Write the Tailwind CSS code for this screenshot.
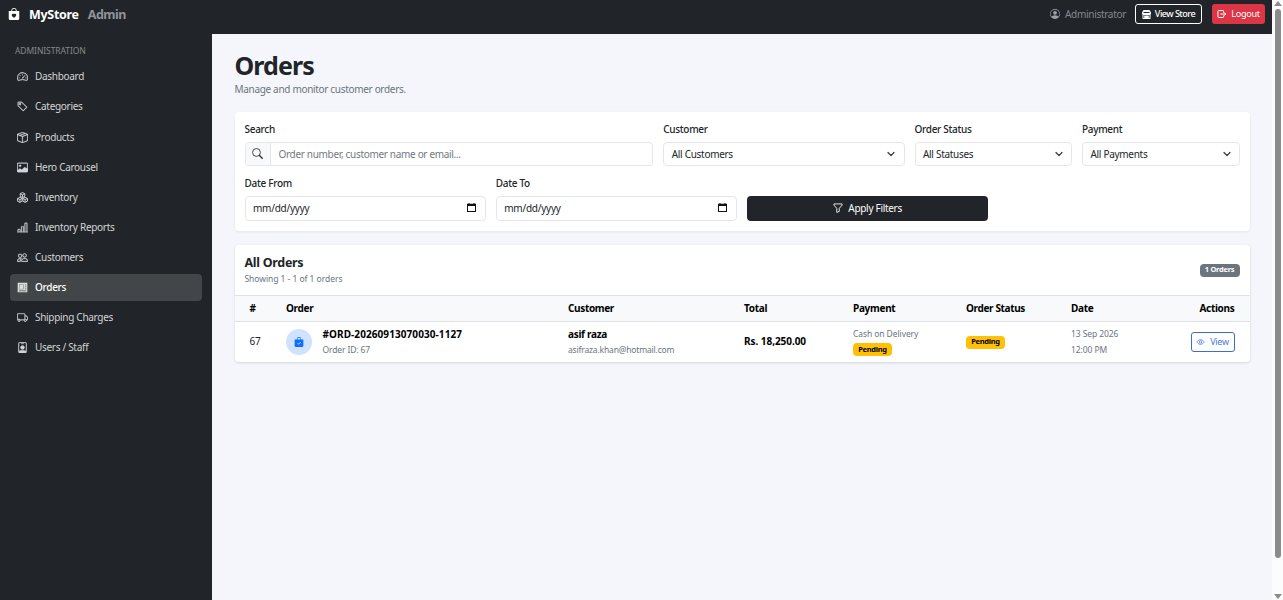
<!DOCTYPE html>
<html lang="en">
<head>
    <meta charset="UTF-8">
    <meta name="viewport" content="width=device-width, initial-scale=1.0">
    <title>MyStore Admin - Orders</title>
    <script src="https://cdn.jsdelivr.net/npm/@tailwindcss/browser@4"></script>
</head>
<body class="h-[600px] overflow-hidden bg-[#f5f6fb] font-['Noto_Sans',sans-serif] text-[10px] tracking-[-0.03em] text-[#212529]">
    <div class="flex h-full">
        <div class="flex flex-1 flex-col">
            <!-- Top Navbar -->
            <header class="flex h-[34px] shrink-0 items-start justify-between bg-[#212529] pl-[8px] pr-[7px]">
                <a href="#" class="flex h-[29px] items-center text-[12.5px] font-bold text-white">
                    <svg class="mr-[9px] -mt-[2px] h-3 w-3" viewBox="0 0 16 16" fill="currentColor"><path fill-rule="evenodd" d="M10.5 3.5a2.5 2.5 0 0 0-5 0V4h5v-.5zm1 0V4H15v10a2 2 0 0 1-2 2H3a2 2 0 0 1-2-2V4h3.5v-.5a3.5 3.5 0 1 1 7 0zM8 7.993c1.664-1.711 5.825 1.283 0 5.132-5.825-3.85-1.664-6.843 0-5.132z"/></svg>
                    <span class="mt-px">MyStore</span>
                    <span class="mt-px ml-[9px] tracking-[-0.04em] text-[#8f9499]">Admin</span>
                </a>
                <div class="flex h-[28px] items-center">
                    <svg class="mr-[5px] h-[10px] w-[10px] text-[#a0a3a6]" viewBox="0 0 16 16" fill="currentColor"><path d="M11 6a3 3 0 1 1-6 0 3 3 0 0 1 6 0z"/><path fill-rule="evenodd" d="M0 8a8 8 0 1 1 16 0A8 8 0 0 1 0 8zm8-7a7 7 0 0 0-5.468 11.37C3.242 11.226 4.805 10 8 10s4.757 1.225 5.468 2.37A7 7 0 0 0 8 1z"/></svg>
                    <span class="mr-[9px] w-[61px] whitespace-nowrap text-[10px] tracking-[-0.03em] text-[#85898d]">Administrator</span>
                    <a href="#" class="mr-[10px] flex h-[20px] w-[67px] items-center justify-center gap-[4px] whitespace-nowrap rounded-[3px] border border-white text-[9.1px] font-medium tracking-[-0.06em] text-white">
                        <svg class="h-[9px] w-[9px]" viewBox="0 0 9 9" fill="currentColor"><path fill-rule="evenodd" d="M1.5 0h6L9 2.500V4.300H8.500V9H.5V4.300H0V2.500zM1.500 2v1h6V2zM1.500 5v3h.7V5.500h4.600V8h.7V5z"/><path d="M3 6.200h1.200V9H3zM5 6.200h1.200V9H5z"/></svg>
                        View Store
                    </a>
                    <a href="#" class="flex h-[20px] w-[53px] items-center justify-center gap-[4px] rounded-[3px] bg-[#dc3545] text-[9.1px] tracking-[-0.03em] text-white">
                        <svg class="h-[10px] w-[10px]" viewBox="0 0 16 16" fill="none" stroke="currentColor" stroke-width="1.6" stroke-linecap="round" stroke-linejoin="round"><path d="M10.500 5V3.500a1 1 0 0 0-1-1h-7a1 1 0 0 0-1 1v9a1 1 0 0 0 1 1h7a1 1 0 0 0 1-1V11M6 8h8M12 6l2 2-2 2"/></svg>
                        Logout
                    </a>
                </div>
            </header>

            <div class="flex flex-1">
                <!-- Sidebar -->
                <aside class="w-[212px] shrink-0 bg-[#212529] px-[10px] pt-[10px] text-[#d3d4d5]">
                    <div class="mb-[5.4px] pl-[5px] text-[8.5px] leading-[14px] tracking-[-0.01em] text-[#85898d]">ADMINISTRATION</div>
                    <nav class="flex flex-col gap-[3.1px] text-[10px]">
                        <a href="#" class="flex h-[27px] items-center gap-[7px] rounded-[4px] pl-[7px]">
                            <svg class="h-[11px] w-[11px]" viewBox="0 0 16 16" fill="currentColor"><path d="M8 4a.5.5 0 0 1 .5.5V6a.5.5 0 0 1-1 0V4.5A.5.5 0 0 1 8 4zM3.732 5.732a.5.5 0 0 1 .707 0l.915.914a.5.5 0 1 1-.708.708l-.914-.915a.5.5 0 0 1 0-.707zM2 10a.5.5 0 0 1 .5-.5h1.586a.5.5 0 0 1 0 1H2.5A.5.5 0 0 1 2 10zm9.500 0a.5.5 0 0 1 .5-.5h1.500a.5.5 0 0 1 0 1H12a.5.5 0 0 1-.5-.5zm.754-4.246a.389.389 0 0 0-.527-.02L7.547 9.310a.91.91 0 1 0 1.302 1.258l3.434-4.297a.389.389 0 0 0-.029-.518z"/><path fill-rule="evenodd" stroke="currentColor" stroke-width=".4" d="M0 10a8 8 0 1 1 15.547 2.661c-.442 1.253-1.845 1.602-2.932 1.25C11.309 13.488 9.475 13 8 13c-1.474 0-3.310.488-4.615.911-1.087.352-2.490.003-2.932-1.250A7.988 7.988 0 0 1 0 10zm8-7a7 7 0 0 0-6.603 9.329c.203.575.923.876 1.680.630C4.397 12.533 6.358 12 8 12s3.604.532 4.923.960c.757.245 1.477-.056 1.680-.631A7 7 0 0 0 8 3z"/></svg>
                            Dashboard
                        </a>
                        <a href="#" class="flex h-[27px] items-center gap-[7px] rounded-[4px] pl-[7px]">
                            <svg class="h-[11px] w-[11px]" viewBox="0 0 16 16" fill="currentColor" stroke="currentColor" stroke-width=".4"><path d="M6 4.500a1.500 1.500 0 1 1-3 0 1.500 1.500 0 0 1 3 0zm-1 0a.5.5 0 1 0-1 0 .5.5 0 0 0 1 0z"/><path d="M2 1h4.586a1 1 0 0 1 .707.293l7 7a1 1 0 0 1 0 1.414l-4.586 4.586a1 1 0 0 1-1.414 0l-7-7A1 1 0 0 1 1 6.586V2a1 1 0 0 1 1-1zm0 5.586 7 7L13.586 9l-7-7H2v4.586z"/></svg>
                            Categories
                        </a>
                        <a href="#" class="flex h-[27px] items-center gap-[7px] rounded-[4px] pl-[7px]">
                            <svg class="h-[11px] w-[11px]" viewBox="0 0 16 16" fill="currentColor" stroke="currentColor" stroke-width=".4"><path d="M8.186 1.113a.5.5 0 0 0-.372 0L1.846 3.500l2.404.961L10.404 2l-2.218-.887zm3.564 1.426L5.596 5 8 5.961 14.154 3.500l-2.404-.961zm3.250 1.700-6.500 2.600v7.922l6.500-2.600V4.240zM7.500 14.762V6.838L1 4.239v7.923l6.500 2.600zM7.443.184a1.500 1.500 0 0 1 1.114 0l7.129 2.852A.5.5 0 0 1 16 3.500v8.662a1 1 0 0 1-.629.928l-7.185 2.874a.5.5 0 0 1-.372 0L.630 13.090a1 1 0 0 1-.630-.928V3.500a.5.5 0 0 1 .314-.464L7.443.184z"/></svg>
                            Products
                        </a>
                        <a href="#" class="flex h-[27px] items-center gap-[7px] rounded-[4px] pl-[7px]">
                            <svg class="h-[11px] w-[11px]" viewBox="0 0 16 16" fill="currentColor" stroke="currentColor" stroke-width=".4"><path d="M6.002 5.500a1.500 1.500 0 1 1-3 0 1.500 1.500 0 0 1 3 0z"/><path d="M2.002 1a2 2 0 0 0-2 2v10a2 2 0 0 0 2 2h12a2 2 0 0 0 2-2V3a2 2 0 0 0-2-2h-12zm12 1a1 1 0 0 1 1 1v6.500l-3.777-1.947a.5.5 0 0 0-.577.093l-3.710 3.710-2.660-1.772a.5.5 0 0 0-.630.062L1.002 12V3a1 1 0 0 1 1-1h12z"/></svg>
                            Hero Carousel
                        </a>
                        <a href="#" class="flex h-[27px] items-center gap-[7px] rounded-[4px] pl-[7px]">
                            <svg class="h-[11px] w-[11px]" viewBox="0 0 16 16" fill="none" stroke="currentColor" stroke-width="1.400" stroke-linejoin="round"><path d="M8 .8l3.300 1.600v4L8 8 4.700 6.400v-4zM4.700 2.400L8 4l3.300-1.600M8 4v4M4.200 7.800l3.300 1.600v4L4.200 15 .8 13.400v-4zM.8 9.400L4.200 11l3.300-1.600M4.200 11v4M11.800 7.800l3.400 1.600v4L11.800 15l-3.300-1.600v-4zM8.500 9.400l3.300 1.600 3.400-1.600M11.800 11v4"/></svg>
                            Inventory
                        </a>
                        <a href="#" class="flex h-[27px] items-center gap-[7px] rounded-[4px] pl-[7px]">
                            <svg class="h-[11px] w-[11px]" viewBox="0 0 16 16" fill="currentColor" stroke="currentColor" stroke-width=".4"><path d="M11 2a1 1 0 0 1 1-1h2a1 1 0 0 1 1 1v12h.5a.5.5 0 0 1 0 1H.5a.5.5 0 0 1 0-1H1v-3a1 1 0 0 1 1-1h2a1 1 0 0 1 1 1v3h1V7a1 1 0 0 1 1-1h2a1 1 0 0 1 1 1v7h1V2zm1 12h2V2h-2v12zm-3 0V7H7v7h2zm-5 0v-3H2v3h2z"/></svg>
                            Inventory Reports
                        </a>
                        <a href="#" class="flex h-[27px] items-center gap-[7px] rounded-[4px] pl-[7px]">
                            <svg class="h-[11px] w-[11px]" viewBox="0 0 16 16" fill="currentColor" stroke="currentColor" stroke-width=".4"><path d="M15 14s1 0 1-1-1-4-5-4-5 3-5 4 1 1 1 1h8zm-7.978-1A.261.261 0 0 1 7 12.996c.001-.264.167-1.030.760-1.720C8.312 10.629 9.282 10 11 10c1.717 0 2.687.630 3.240 1.276.593.690.758 1.457.760 1.720l-.008.002-.014.002H7.022zM11 7a2 2 0 1 0 0-4 2 2 0 0 0 0 4zm3-2a3 3 0 1 1-6 0 3 3 0 0 1 6 0zM6.936 9.280a5.880 5.880 0 0 0-1.230-.247A7.350 7.350 0 0 0 5 9c-4 0-5 3-5 4 0 .667.333 1 1 1h4.216A2.238 2.238 0 0 1 5 13c0-1.010.377-2.042 1.090-2.904.243-.294.526-.569.846-.816zM4.920 10A5.493 5.493 0 0 0 4 13H1c0-.260.164-1.030.760-1.724.545-.636 1.492-1.256 3.160-1.275zM1.500 5.500a3 3 0 1 1 6 0 3 3 0 0 1-6 0zm3-2a2 2 0 1 0 0 4 2 2 0 0 0 0-4z"/></svg>
                            Customers
                        </a>
                        <a href="#" class="flex h-[27px] items-center gap-[7px] rounded-[4px] bg-[#424649] pl-[7px] font-medium text-white">
                            <svg class="h-[11px] w-[11px] text-[#dedfe0]" viewBox="0 0 16 16" fill="currentColor"><path fill-rule="evenodd" d="M1 1h14v14H1zM3 3.500v7h6.500v-7zM11.500 3.500v1.200H13.500V3.500zM11.500 6.500v1.200H13.500V6.500zM11.500 9.500v1.200H13.500V9.500zM3 12.200v1.100h10.500v-1.100z"/><path d="M3.400 3.900h5.700v6.200h-5.700z"/></svg>
                            Orders
                        </a>
                        <a href="#" class="flex h-[27px] items-center gap-[7px] rounded-[4px] pl-[7px]">
                            <svg class="h-[11px] w-[11px]" viewBox="0 0 16 16" fill="currentColor" stroke="currentColor" stroke-width=".4"><path d="M0 3.500A1.500 1.500 0 0 1 1.500 2h9A1.500 1.500 0 0 1 12 3.500V5h1.020a1.500 1.500 0 0 1 1.170.563l1.481 1.850a1.500 1.500 0 0 1 .329.938V10.500a1.500 1.500 0 0 1-1.500 1.500H14a2 2 0 1 1-4 0H5a2 2 0 1 1-3.998-.085A1.500 1.500 0 0 1 0 10.500v-7zm1.294 7.456A1.999 1.999 0 0 1 4.732 11h5.536a2.010 2.010 0 0 1 .732-.732V3.500a.5.5 0 0 0-.5-.5h-9a.5.5 0 0 0-.5.5v7a.5.5 0 0 0 .294.456zM12 10a2 2 0 0 1 1.732 1h.768a.5.5 0 0 0 .5-.5V8.350a.5.5 0 0 0-.110-.312l-1.480-1.850A.5.5 0 0 0 13.020 6H12v4zm-9 1a1 1 0 1 0 0 2 1 1 0 0 0 0-2zm9 0a1 1 0 1 0 0 2 1 1 0 0 0 0-2z"/></svg>
                            Shipping Charges
                        </a>
                        <a href="#" class="flex h-[27px] items-center gap-[7px] rounded-[4px] pl-[7px]">
                            <svg class="h-[11px] w-[11px]" viewBox="0 0 16 16" fill="currentColor" stroke="currentColor" stroke-width=".4"><path d="M6.500 2a.5.5 0 0 0 0 1h3a.5.5 0 0 0 0-1h-3zM11 8a3 3 0 1 1-6 0 3 3 0 0 1 6 0z"/><path d="M4.500 0A2.500 2.500 0 0 0 2 2.500V14a2 2 0 0 0 2 2h8a2 2 0 0 0 2-2V2.500A2.500 2.500 0 0 0 11.500 0h-7zM3 2.500A1.500 1.500 0 0 1 4.500 1h7A1.500 1.500 0 0 1 13 2.500v10.795a4.200 4.200 0 0 0-.776-.492C11.392 12.387 10.063 12 8 12s-3.392.387-4.224.803a4.200 4.200 0 0 0-.776.492V2.500z"/></svg>
                            Users / Staff
                        </a>
                    </nav>
                </aside>

                <!-- Main Content -->
                <main class="flex-1 pl-[22.5px] pr-[22.5px] pt-[15px]">
                    <h1 class="h-[33px] text-[25px] font-bold leading-[32px] tracking-[-0.037em]">Orders</h1>
                    <p class="h-[15px] text-[10px] leading-[15px] tracking-[-0.032em] text-[#6c757d]">Manage and monitor customer orders.</p>

                    <!-- Filters -->
                    <form class="mt-[14.5px] grid h-[119.5px] grid-cols-12 content-start gap-x-[10px] gap-y-[10px] rounded-[4px] bg-white px-[10px] pt-[10px] shadow-[0_1px_3px_rgba(0,0,0,0.08)]">
                        <div class="col-span-5">
                            <label class="mb-[5px] block h-[15px] font-medium leading-[15px]">Search</label>
                            <div class="flex h-[24.5px] rounded-[4px] border border-[#e4e7ea] text-[10px]">
                                <span class="flex w-[25px] items-center justify-center rounded-l-[3px] border-r border-[#e4e7ea] bg-[#f8f9fa]">
                                    <svg class="h-[11px] w-[11px]" viewBox="0 0 16 16" fill="none" stroke="currentColor" stroke-width="1.200"><circle cx="6.500" cy="6.500" r="5.700"/><path stroke-width="1.800" stroke-linecap="round" d="M10.900 10.900l4 4"/></svg>
                                </span>
                                <span class="flex items-center pl-[8px] pt-px tracking-[-0.032em] text-[#73797f]">Order number, customer name or email...</span>
                            </div>
                        </div>
                        <div class="col-span-3">
                            <label class="mb-[5px] block h-[15px] font-medium leading-[15px]">Customer</label>
                            <div class="flex h-[24.5px] items-center justify-between rounded-[4px] border border-[#e4e7ea] pl-[7.5px] pr-[9px] pt-px">
                                All Customers
                                <svg class="h-[8px] w-[8px]" viewBox="0 0 16 16" fill="none" stroke="#343a40" stroke-width="2.400" stroke-linecap="round" stroke-linejoin="round"><path d="m2 5 6 6 6-6"/></svg>
                            </div>
                        </div>
                        <div class="col-span-2">
                            <label class="mb-[5px] block h-[15px] font-medium leading-[15px]">Order Status</label>
                            <div class="flex h-[24.5px] items-center justify-between rounded-[4px] border border-[#e4e7ea] pl-[7.5px] pr-[8px] pt-px">
                                All Statuses
                                <svg class="h-[8px] w-[8px]" viewBox="0 0 16 16" fill="none" stroke="#343a40" stroke-width="2.400" stroke-linecap="round" stroke-linejoin="round"><path d="m2 5 6 6 6-6"/></svg>
                            </div>
                        </div>
                        <div class="col-span-2">
                            <label class="mb-[5px] block h-[15px] font-medium leading-[15px]">Payment</label>
                            <div class="flex h-[24.5px] items-center justify-between rounded-[4px] border border-[#e4e7ea] pl-[7.5px] pr-[8px] pt-px">
                                All Payments
                                <svg class="h-[8px] w-[8px]" viewBox="0 0 16 16" fill="none" stroke="#343a40" stroke-width="2.400" stroke-linecap="round" stroke-linejoin="round"><path d="m2 5 6 6 6-6"/></svg>
                            </div>
                        </div>
                        <div class="col-span-3">
                            <label class="mb-[5px] block h-[15px] font-medium leading-[15px]">Date From</label>
                            <div class="flex h-[24.5px] items-center justify-between rounded-[4px] border border-[#e4e7ea] pl-[7.5px] pr-[9px]">
                                <span class="tracking-[-0.025em]">mm/dd/yyyy</span>
                                <svg class="-mt-px h-[9px] w-[9px]" viewBox="0 0 9 9" fill="#111"><path fill-rule="evenodd" d="M1.500 0h1v.8h4V0h1v.8H9V9H0V.8h1.500zM1 3v5h7V3z"/></svg>
                            </div>
                        </div>
                        <div class="col-span-3">
                            <label class="mb-[5px] block h-[15px] font-medium leading-[15px]">Date To</label>
                            <div class="flex h-[24.5px] items-center justify-between rounded-[4px] border border-[#e4e7ea] pl-[7.5px] pr-[9px]">
                                <span class="tracking-[-0.025em]">mm/dd/yyyy</span>
                                <svg class="-mt-px h-[9px] w-[9px]" viewBox="0 0 9 9" fill="#111"><path fill-rule="evenodd" d="M1.500 0h1v.8h4V0h1v.8H9V9H0V.8h1.500zM1 3v5h7V3z"/></svg>
                            </div>
                        </div>
                        <div class="col-span-3 flex items-end">
                            <button type="submit" class="flex h-[24.5px] w-full items-center justify-center gap-[5px] rounded-[4px] bg-[#212529] text-white">
                                <svg class="h-[10px] w-[10px]" viewBox="0 0 16 16" fill="none" stroke="currentColor" stroke-width="1.400" stroke-linejoin="round"><path d="M1.500 1.500h13v2L10 8.500v5l-4 1.500V8.500l-4.500-5z"/></svg>
                                Apply Filters
                            </button>
                        </div>
                    </form>

                    <!-- Orders Table -->
                    <section class="mt-[13.5px] overflow-hidden rounded-[4px] bg-white shadow-[0_1px_3px_rgba(0,0,0,0.13)]">
                        <div class="flex h-[50px] items-center justify-between px-[10px]">
                            <div>
                                <h2 class="text-[12.5px] font-bold leading-[17px]">All Orders</h2>
                                <p class="text-[8.5px] leading-[15px] tracking-[-0.005em] text-[#6c757d]">Showing 1 - 1 of 1 orders</p>
                            </div>
                            <span class="mt-px flex h-[13px] w-[40px] items-center justify-center whitespace-nowrap rounded-[4px] bg-[#6c757d] text-[7.5px] font-bold text-white">1 Orders</span>
                        </div>
                        <table class="w-full table-fixed border-collapse text-left">
                            <colgroup>
                                <col class="w-[46.5px]"><col class="w-[282px]"><col class="w-[176px]"><col class="w-[109px]"><col class="w-[113px]"><col class="w-[105px]"><col class="w-[93px]"><col>
                            </colgroup>
                            <thead>
                                <tr class="h-[26px] border-y border-[#dee2e6] bg-[#f8f9fa] font-bold text-black">
                                    <th class="pl-[15px]">#</th>
                                    <th class="pl-[5px]">Order</th>
                                    <th class="pl-[5px] tracking-[-0.035em]">Customer</th>
                                    <th class="pl-[5px]">Total</th>
                                    <th class="pl-[5px]">Payment</th>
                                    <th class="pl-[5px] tracking-[-0.035em]">Order Status</th>
                                    <th class="pl-[5px]">Date</th>
                                    <th class="pr-[15px] text-right">Actions</th>
                                </tr>
                            </thead>
                            <tbody>
                                <tr class="h-[40.5px]">
                                    <td class="pl-[15px]">67</td>
                                    <td class="pl-[5px]">
                                        <div class="flex items-center gap-[10.5px]">
                                            <span class="flex h-[26px] w-[26px] items-center justify-center rounded-full bg-[#cfe2ff]">
                                                <svg class="h-[10px] w-[10px] text-[#0d6efd]" viewBox="0 0 16 16" fill="currentColor"><path fill-rule="evenodd" d="M10.500 3.500a2.500 2.500 0 0 0-5 0V4h5v-.5zm1 0V4H15v10a2 2 0 0 1-2 2H3a2 2 0 0 1-2-2V4h3.500v-.5a3.500 3.500 0 1 1 7 0zm-.646 5.354a.5.5 0 0 0-.708-.708L7.500 10.793 6.354 9.646a.5.5 0 1 0-.708.708l1.500 1.500a.5.5 0 0 0 .708 0l3-3z"/></svg>
                                            </span>
                                            <div>
                                                <div class="font-bold leading-[16px] tracking-[0.008em] text-black">#ORD-20260913070030-1127</div>
                                                <div class="text-[8.5px] leading-[16px] tracking-[-0.015em] text-[#6c757d]">Order ID: 67</div>
                                            </div>
                                        </div>
                                    </td>
                                    <td class="pl-[5px]">
                                        <div class="font-bold leading-[16px] text-black">asif raza</div>
                                        <div class="text-[8.5px] leading-[16px] tracking-[-0.02em] text-[#6c757d]">asifraza.khan@hotmail.com</div>
                                    </td>
                                    <td class="pl-[5px] font-bold tracking-[-0.005em] text-black">Rs. 18,250.00</td>
                                    <td class="pl-[5px]">
                                        <div class="text-[8.5px] leading-[16px] tracking-[-0.01em] text-[#6c757d]">Cash on Delivery</div>
                                        <div class="flex h-[16px] items-center">
                                            <span class="flex h-[13px] w-[39px] items-center justify-center rounded-[4px] bg-[#ffc107] text-[7.5px] font-bold text-black">Pending</span>
                                        </div>
                                    </td>
                                    <td class="pl-[5px]">
                                        <span class="mt-px flex h-[13px] w-[39px] items-center justify-center rounded-[4px] bg-[#ffc107] text-[7.5px] font-bold text-black">Pending</span>
                                    </td>
                                    <td class="pl-[5px] text-[8.5px] leading-[16px] tracking-[-0.01em] text-[#6c757d]">13 Sep 2026<br>12:00 PM</td>
                                    <td class="pr-[15px]">
                                        <a href="#" class="ml-auto flex h-[20px] w-[44px] items-center justify-center gap-[5px] rounded-[3px] border border-[#3a6fc4] text-[9px] text-[#3f7de0]">
                                            <svg class="h-[8px] w-[9px]" viewBox="0 0 16 16" fill="none" stroke="currentColor" stroke-width="1.500"><path d="M.7 8S3.300 3.200 8 3.200 15.300 8 15.300 8 12.700 12.800 8 12.800.7 8 .7 8z"/><circle cx="8" cy="8" r="2.400"/></svg>
                                            View
                                        </a>
                                    </td>
                                </tr>
                            </tbody>
                        </table>
                    </section>
                </main>
            </div>
        </div>

        <!-- Page scrollbar -->
        <div class="flex w-[11px] shrink-0 flex-col items-center bg-[#fcfcfc] pt-[1px] pl-px">
            <svg class="h-[5px] w-[8px]" viewBox="0 0 8 5" fill="#8b8b8b"><path d="M4 0l4 5H0z"/></svg>
            <div class="mt-[3px] h-[549px] w-[6px] rounded-full bg-[#8b8b8b]"></div>
            <svg class="mt-auto mb-[1px] h-[5px] w-[8px]" viewBox="0 0 8 5" fill="#8b8b8b"><path d="M4 5l4-5H0z"/></svg>
        </div>
    </div>
</body>
</html>
